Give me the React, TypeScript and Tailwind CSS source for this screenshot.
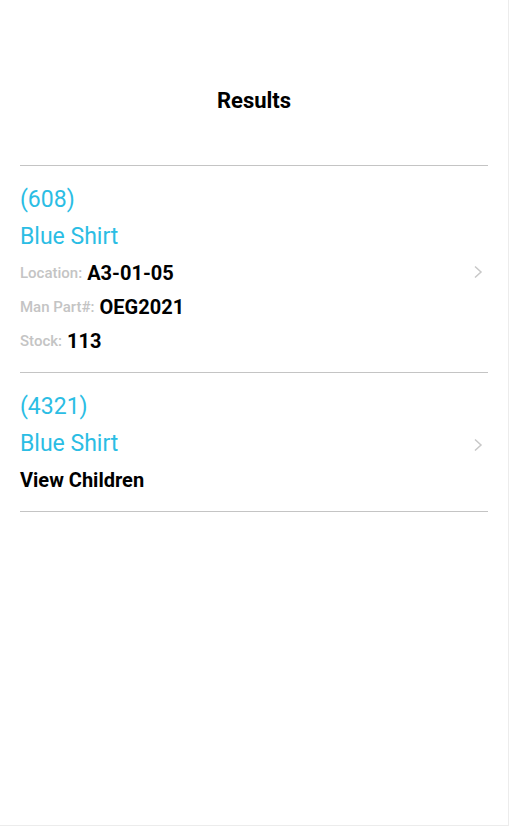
const items = [
  {
    code: "(608)",
    name: "Blue Shirt",
    details: [
      { label: "Location:", value: "A3-01-05" },
      { label: "Man Part#:", value: "OEG2021" },
      { label: "Stock:", value: "113" },
    ],
  },
  {
    code: "(4321)",
    name: "Blue Shirt",
    details: [],
    children: true,
  },
]

const Chevron = () => (
  <svg width="10" height="14" viewBox="0 0 10 14" fill="none">
    <polyline points="2,1.5 8,7 2,12.5" stroke="#c8c8c8" strokeWidth="1.5" />
  </svg>
)

const App = () => {
  return (
    <div
      className="h-[826px] w-full border-b border-r border-[#ececec] bg-white"
      style={{ fontFamily: "Roboto, sans-serif" }}
    >
      <div className="flex h-[165px] items-start justify-center pt-[86px]">
        <div className="h-[30px] text-[22px] font-bold leading-[30px] text-black">
          Results
        </div>
      </div>
      <div className="mx-5 border-t border-[#c4c4c4]">
        {items.map((item) => (
          <div
            key={item.code}
            className="flex items-center justify-between border-b border-[#c4c4c4] pt-4 pb-[14px]"
          >
            <div className="flex flex-col">
              <div className="h-9 text-[23px] leading-9 text-[#2bbde4]">
                {item.code}
              </div>
              <div className="h-[38px] text-[23px] leading-[38px] text-[#2bbde4]">
                {item.name}
              </div>
              {item.details.map((d) => (
                <div key={d.label} className="flex h-[34px] items-center gap-[5px]">
                  <span className="text-[15px] font-medium text-[#c4c4c4]">{d.label}</span>
                  <span className="text-[20px] font-bold text-black">{d.value}</span>
                </div>
              ))}
              {item.children && (
                <div className="h-[34px] text-[20px] font-bold leading-[34px] text-black">
                  View Children
                </div>
              )}
            </div>
            <div className="mr-[5px] mt-[4px]">
              <Chevron />
            </div>
          </div>
        ))}
      </div>
    </div>
  )
}

export default App
